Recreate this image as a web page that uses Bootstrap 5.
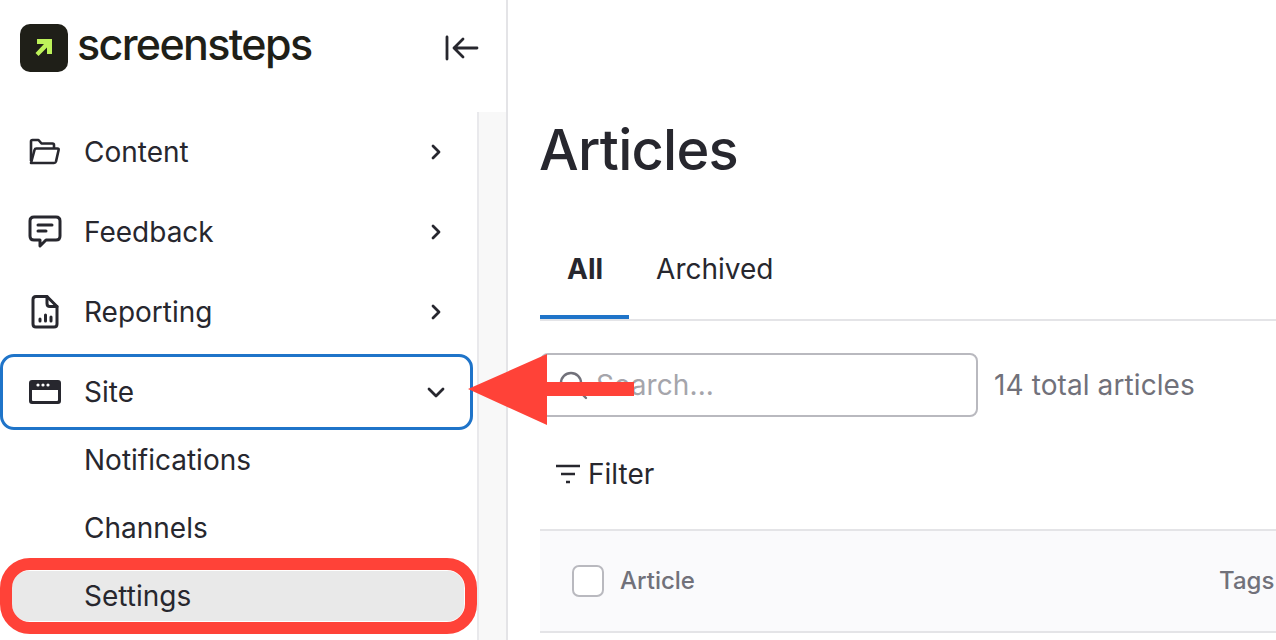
<!DOCTYPE html>
<html lang="en">
<head>
  <meta charset="UTF-8" />
  <meta name="viewport" content="width=device-width, initial-scale=1.0"/>
  <title>ScreenSteps Articles</title>
  <link href="https://cdn.jsdelivr.net/npm/bootstrap@5.3.0/dist/css/bootstrap.min.css" rel="stylesheet">
  <style>
    html, body { height: 640px; overflow: hidden; }
    body { font-family: Inter, "Liberation Sans", sans-serif; color: #27272e; background: #fff; position: relative; }

    .side-panel { width: 508px; height: 640px; flex: none; border-right: 2px solid #e4e4e7; }
    .side-head { height: 112px; padding: 24px 26px 0 20px; }
    .logo-box { width: 48px; height: 48px; border-radius: 10px; background: #1f1f18; }
    .logo-word { font-size: 43px; font-weight: 500; letter-spacing: -1.65px; line-height: 44px; color: #1f1f18; margin-left: 9px; margin-top: -2px; }
    .side-body { height: 528px; }
    .side-list { width: 477px; flex: none; }
    .side-gutter { flex: 1; background: #f8f8f8; border-left: 2px solid #e9e9ec; }

    .menu-row { height: 80px; padding: 0 32px 0 28px; font-size: 28px; color: #27272e; }
    .menu-row.is-open { height: 76px; width: 473px; margin-top: 2px; margin-bottom: 2px; padding: 0 25px 0 25px; border: 3px solid #1f74c9; border-radius: 14px; }
    .menu-icon { width: 34px; height: 34px; flex: none; margin-right: 22px; }
    .sub-list { margin-top: -6px; }
    .sub-row { height: 68px; padding-left: 84px; font-size: 28px; color: #27272e; }
    .sub-row.is-active { height: 50px; margin: 9px 13px 9px 12px; padding-left: 72px; background: #e9e9e9; border-radius: 16px; }

    .main-panel { padding: 0 0 0 32px; min-width: 0; flex: 1; }
    .page-title { font-size: 56px; font-weight: 500; letter-spacing: -.75px; line-height: 68px; margin: 116px 0 0 -1px; color: #27272e; }
    .tab-bar { margin-top: 34px; height: 103px; border-bottom: 2px solid #e4e4e7; font-size: 28px; }
    .tab-item { height: 101px; padding: 0 26px 0 27px; color: #27272e; }
    .tab-item.is-current { font-weight: 700; border-bottom: 4px solid #1f74c9; padding-top: 4px; }
    .search-row { margin-top: 32px; font-size: 28px; letter-spacing: .1px; color: #71717a; }
    .search-box { width: 438px; height: 64px; border: 2px solid #b9b9bf; border-radius: 8px; padding-left: 16px; color: #a5a5ab; }
    .filter-row { margin-top: 37px; height: 40px; padding-left: 15px; font-size: 28px; color: #27272e; }
    .filter-icon { margin-right: 7px; }
    .table-head { margin-top: 35px; height: 104px; background: #fafafc; border-top: 2px solid #e4e4e7; border-bottom: 2px solid #e4e4e7; padding-left: 32px; font-size: 24px; font-weight: 500; color: #71717a; }
    .fake-check { width: 32px; height: 32px; border: 2px solid #b9b9bf; border-radius: 7px; background: #fff; margin-right: 16px; flex: none; }
    .tags-col { position: absolute; left: 1219px; white-space: nowrap; }

    .mark-ring { position: absolute; left: 0; top: 558px; width: 477px; height: 76px; border: 12px solid #ff4238; border-radius: 30px; }
    .mark-arrow { position: absolute; left: 468px; top: 354px; }
  </style>
</head>
<body>
  <div class="d-flex">
    <aside class="side-panel d-flex flex-column">
      <div class="side-head d-flex justify-content-between">
        <div class="d-flex">
          <div class="logo-box d-flex align-items-center justify-content-center">
            <svg width="20" height="20" viewBox="0 0 20 20"><path d="M3 1h15v15h-5V9.500L4.500 18 1.500 15 10 6H3z" fill="#bdf25a"/></svg>
          </div>
          <span class="logo-word">screensteps</span>
        </div>
        <svg class="mt-1" width="36" height="36" viewBox="0 0 36 36" fill="none" stroke="#27272e" stroke-width="2.800" stroke-linecap="round" stroke-linejoin="round"><path d="M3 9v22M33 20H10M19 11l-9 9 9 9"/></svg>
      </div>
      <div class="side-body d-flex">
        <div class="side-list">
          <div class="menu-row d-flex align-items-center">
            <svg class="menu-icon" viewBox="0 0 34 34" fill="none" stroke="#27272e" stroke-width="2.600" stroke-linejoin="round"><path d="M3 26V6.500q0-1.500 1.500-1.500h6l3 3.500h11q1.500 0 1.500 1.500v3"/><path d="M3 28l3.500-13q.4-1.500 1.900-1.500h21q1.600 0 1.200 1.500L28 26.500q-.4 1.500-2 1.500z"/></svg>
            <span class="flex-grow-1">Content</span>
            <svg width="16" height="16" viewBox="0 0 16 16" fill="none" stroke="#27272e" stroke-width="2.800" stroke-linecap="round" stroke-linejoin="round"><path d="M4 2l6 6-6 6"/></svg>
          </div>
          <div class="menu-row d-flex align-items-center">
            <svg class="menu-icon" viewBox="0 0 34 34" fill="none" stroke="#27272e" stroke-width="3" stroke-linejoin="round" stroke-linecap="round"><path d="M6 2h22q4 0 4 4v15q0 4-4 4H18l-6 6v-6H6q-4 0-4-4V6q0-4 4-4z"/><path d="M10 10h14M10 16h8"/></svg>
            <span class="flex-grow-1">Feedback</span>
            <svg width="16" height="16" viewBox="0 0 16 16" fill="none" stroke="#27272e" stroke-width="2.800" stroke-linecap="round" stroke-linejoin="round"><path d="M4 2l6 6-6 6"/></svg>
          </div>
          <div class="menu-row d-flex align-items-center">
            <svg class="menu-icon" viewBox="0 0 34 34" fill="none" stroke="#27272e" stroke-width="3" stroke-linejoin="round" stroke-linecap="round"><path d="M8 1.500h11l10 10V29q0 3-3 3H8q-3 0-3-3V4.500q0-3 3-3z"/><path d="M19 1.500v7q0 3 3 3h7"/><path d="M12 26v-2M17.500 26v-6M23 26v-4"/></svg>
            <span class="flex-grow-1">Reporting</span>
            <svg width="16" height="16" viewBox="0 0 16 16" fill="none" stroke="#27272e" stroke-width="2.800" stroke-linecap="round" stroke-linejoin="round"><path d="M4 2l6 6-6 6"/></svg>
          </div>
          <div class="menu-row is-open d-flex align-items-center">
            <svg class="menu-icon" viewBox="0 0 34 34"><path fill-rule="evenodd" fill="#27272e" d="M4 5h26q3 0 3 3v18q0 3-3 3H4q-3 0-3-3V8q0-3 3-3zM4 15v10q0 1 1 1h24q1 0 1-1V15z"/><circle cx="10" cy="10" r="1.600" fill="#fff"/><circle cx="15" cy="10" r="1.600" fill="#fff"/><circle cx="20" cy="10" r="1.600" fill="#fff"/></svg>
            <span class="flex-grow-1">Site</span>
            <svg width="18" height="16" viewBox="0 0 18 16" fill="none" stroke="#27272e" stroke-width="2.800" stroke-linecap="round" stroke-linejoin="round"><path d="M2 5l7 7 7-7"/></svg>
          </div>
          <div class="sub-list">
            <div class="sub-row d-flex align-items-center">Notifications</div>
            <div class="sub-row d-flex align-items-center">Channels</div>
            <div class="sub-row is-active d-flex align-items-center">Settings</div>
          </div>
        </div>
        <div class="side-gutter"></div>
      </div>
    </aside>

    <main class="main-panel">
      <h1 class="page-title">Articles</h1>
      <div class="tab-bar d-flex">
        <div class="tab-item is-current d-flex align-items-center">All</div>
        <div class="tab-item d-flex align-items-center">Archived</div>
      </div>
      <div class="search-row d-flex align-items-center gap-3">
        <div class="search-box d-flex align-items-center gap-2">
          <svg width="30" height="30" viewBox="0 0 30 30" fill="none" stroke="#71717a" stroke-width="2.400" stroke-linecap="round"><circle cx="13" cy="13" r="10"/><path d="M21 21l7 7"/></svg>
          <span>Search...</span>
        </div>
        <span>14 total articles</span>
      </div>
      <div class="filter-row d-flex align-items-center">
        <svg class="filter-icon" width="26" height="22" viewBox="0 0 26 22" fill="none" stroke="#27272e" stroke-width="2.400"><path d="M1 3h24M6 11h14M11 19h4"/></svg>
        <span>Filter</span>
      </div>
      <div class="table-head d-flex align-items-center">
        <span class="fake-check"></span>
        <span>Article</span>
        <span class="tags-col">Tags</span>
      </div>
    </main>
  </div>

  <div class="mark-ring"></div>
  <svg class="mark-arrow" width="168" height="72" viewBox="0 0 168 72"><path d="M0 35L79 0v28h87v14H79v29z" fill="#ff4238"/></svg>

  <script src="https://cdn.jsdelivr.net/npm/bootstrap@5.3.0/dist/js/bootstrap.bundle.min.js"></script>
</body>
</html>
